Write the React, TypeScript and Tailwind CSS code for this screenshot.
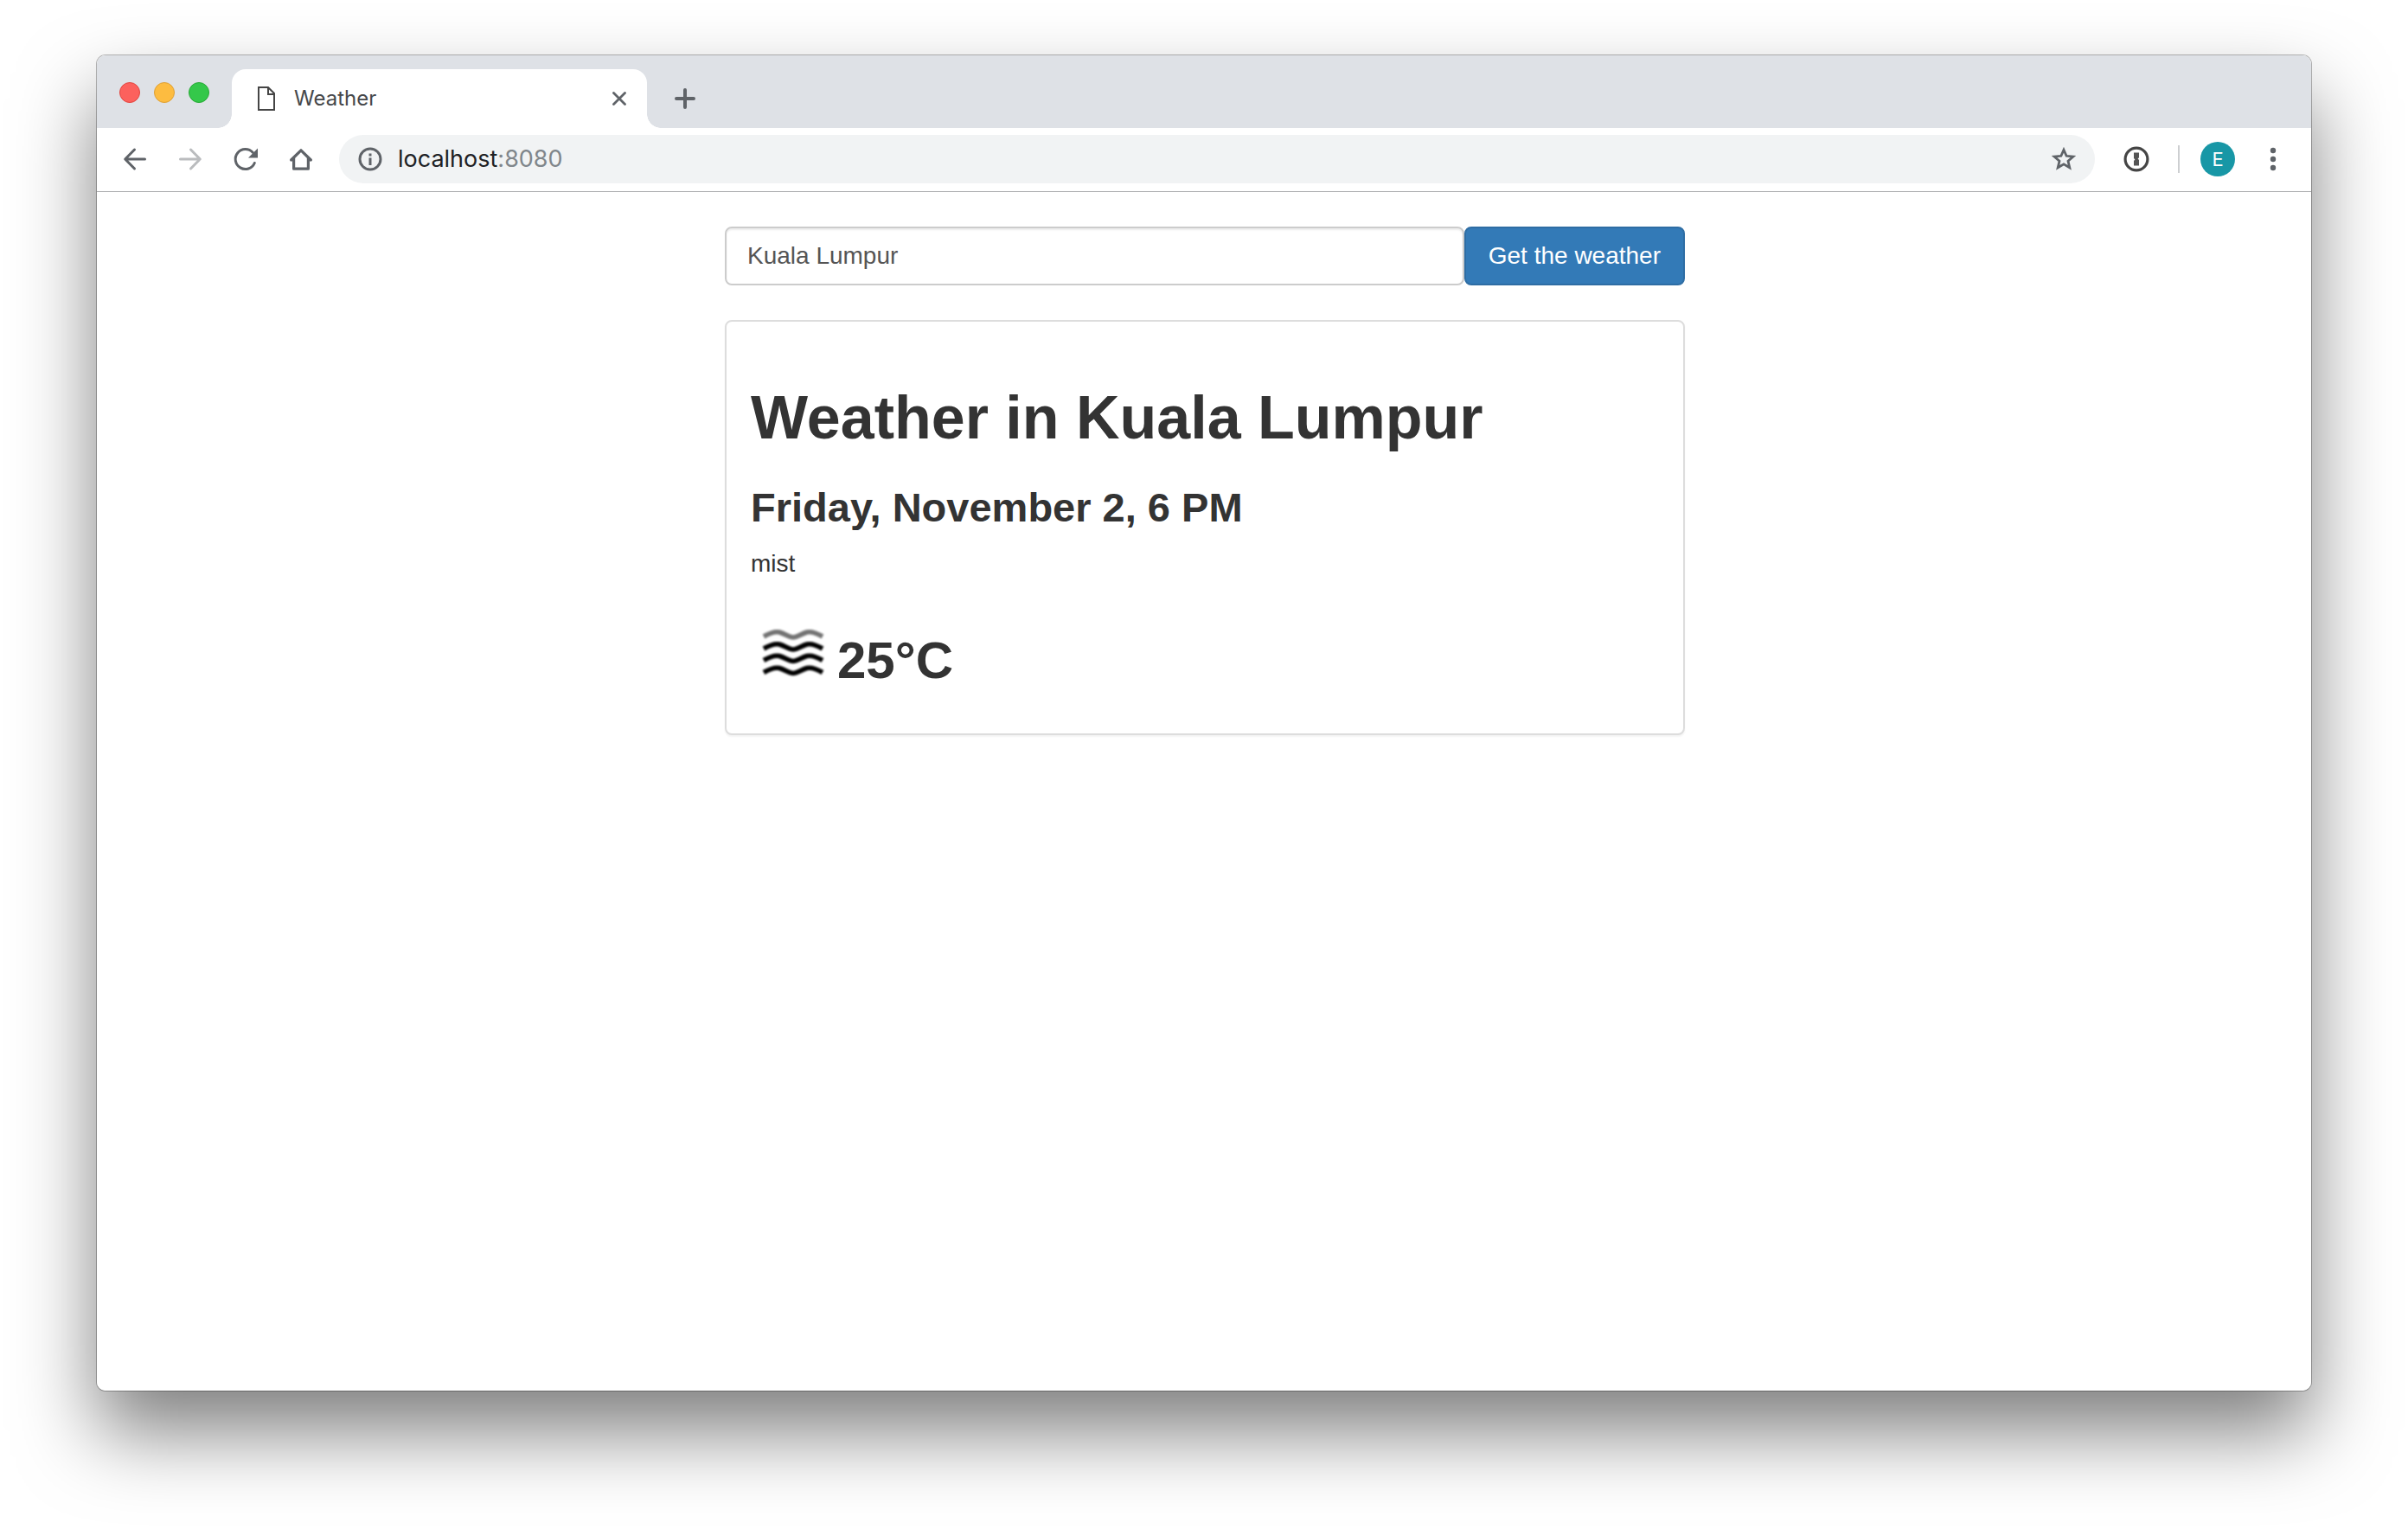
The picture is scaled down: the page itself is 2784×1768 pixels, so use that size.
import { useState } from "react";
import type { ReactNode } from "react";

function ToolbarButton({ label, children, className = "text-[#5f6368]" }: { label: string; children: ReactNode; className?: string }) {
  return (
    <button type="button" aria-label={label} className={`flex h-14 w-16 shrink-0 items-center justify-center ${className}`}>
      {children}
    </button>
  );
}

function BackIcon({ flipped = false }: { flipped?: boolean }) {
  return (
    <svg width="32" height="32" viewBox="0 0 32 32" fill="none" stroke="currentColor" strokeWidth="3" strokeLinecap="round" strokeLinejoin="round" className={flipped ? "rotate-180" : ""}>
      <path d="M27.5 16H5M15.5 5L4.7 16L15.5 27" />
    </svg>
  );
}

function ReloadIcon() {
  return (
    <svg width="32" height="32" viewBox="0 0 32 32" fill="none">
      <path d="M26.3 20.5A11.5 11.5 0 1 1 24.2 8.3" stroke="currentColor" strokeWidth="3" strokeLinecap="round" />
      <path d="M30 3.5V14.5H19Z" fill="currentColor" />
    </svg>
  );
}

function HomeIcon() {
  return (
    <svg width="32" height="32" viewBox="0 0 32 32" fill="none" stroke="currentColor" strokeWidth="3.2" strokeLinejoin="round" strokeLinecap="round">
      <path d="M4.6 17L16 5.8L27.4 17" />
      <path d="M7.6 15V27.2H24.4V15" />
    </svg>
  );
}

function InfoIcon() {
  return (
    <svg width="28" height="28" viewBox="0 0 28 28" fill="none" className="shrink-0 text-[#5f6368]">
      <circle cx="14" cy="14" r="12" stroke="currentColor" strokeWidth="3" />
      <rect x="12.5" y="7.5" width="3" height="3" fill="currentColor" />
      <rect x="12.5" y="12.5" width="3" height="8.5" fill="currentColor" />
    </svg>
  );
}

function StarIcon() {
  return (
    <svg width="32" height="32" viewBox="0 0 32 32" fill="none" stroke="currentColor" strokeWidth="2.8" strokeLinejoin="miter">
      <path d="M16 5.2L19.1 12.3L26.9 13L21 18.2L22.8 25.8L16 21.8L9.2 25.8L11 18.2L5.1 13L12.9 12.3Z" />
    </svg>
  );
}

function KeyholeIcon() {
  return (
    <svg width="30" height="30" viewBox="0 0 30 30" fill="none">
      <circle cx="15" cy="15" r="12.9" stroke="#454545" strokeWidth="3.2" />
      <path d="M12 7.5H18V13.2L16.6 14.6L18 16V22.5H12V17L13.4 15.4L12 14Z" fill="#555" />
    </svg>
  );
}

function MistIcon() {
  const wave = "M14 1C21 -3 27 -5 32 -4C39 -2 43 2 48 2C53 2 57 -2 64 -4C69 -5 75 -3 82 1";
  return (
    <svg width="100" height="84" viewBox="0 0 100 84" fill="none" stroke="#000" strokeWidth="5.5" role="img" aria-label="mist">
      <defs>
        <filter id="soften" x="-10%" y="-50%" width="120%" height="200%">
          <feGaussianBlur stdDeviation="0.9" />
        </filter>
      </defs>
      <g filter="url(#soften)">
        <path d={wave} transform="translate(1 21)" opacity="0.55" />
        <path d={wave} transform="translate(1 35)" />
        <path d={wave} transform="translate(1 48.5)" />
        <path d={wave} transform="translate(1 62.5)" />
      </g>
    </svg>
  );
}

function TabStrip() {
  return (
    <div className="flex h-[84px] items-end bg-[#dee1e6]">
      <div className="flex h-[82px] w-[140px] shrink-0 items-center gap-4 pl-[26px]">
        <button type="button" aria-label="Close window" className="size-6 rounded-full border border-[#e2453f] bg-[#fc615d]" />
        <button type="button" aria-label="Minimize window" className="size-6 rounded-full border border-[#dea035] bg-[#fdbc40]" />
        <button type="button" aria-label="Zoom window" className="size-6 rounded-full border border-[#27a935] bg-[#34c84a]" />
      </div>
      <div className="size-4 shrink-0 bg-[radial-gradient(circle_at_top_left,transparent_15.5px,white_16px)]" />
      <div className="flex h-[68px] w-[480px] shrink-0 items-center rounded-t-2xl bg-white pr-6 pl-[30px]">
        <svg width="20" height="28" viewBox="0 0 20 28" fill="none" stroke="#454545" strokeWidth="2" className="shrink-0">
          <path d="M1 1H12L19 8V27H1Z" />
          <path d="M12 1V9H19" />
        </svg>
        <span className="ml-[22px] flex-1 text-[24px] leading-8 text-[#45474a]">Weather</span>
        <button type="button" aria-label="Close tab" className="text-[#5f6368]">
          <svg width="16" height="16" viewBox="0 0 16 16" fill="none" stroke="currentColor" strokeWidth="2.8" strokeLinecap="round">
            <path d="M1.5 1.5L14.5 14.5M14.5 1.5L1.5 14.5" />
          </svg>
        </button>
      </div>
      <div className="size-4 shrink-0 bg-[radial-gradient(circle_at_top_right,transparent_15.5px,white_16px)]" />
      <button type="button" aria-label="New tab" className="ml-4 flex h-[68px] items-center text-[#5f6368]">
        <svg width="24" height="24" viewBox="0 0 24 24" fill="none" stroke="currentColor" strokeWidth="4" strokeLinecap="round">
          <path d="M12 2V22M2 12H22" />
        </svg>
      </button>
    </div>
  );
}

function Toolbar() {
  return (
    <div className="flex items-center border-b border-[#b0b1b3] bg-white px-3 pt-2 pb-[9px]">
      <ToolbarButton label="Back"><BackIcon /></ToolbarButton>
      <ToolbarButton label="Forward" className="text-[#babcbe]"><BackIcon flipped /></ToolbarButton>
      <ToolbarButton label="Reload"><ReloadIcon /></ToolbarButton>
      <ToolbarButton label="Home"><HomeIcon /></ToolbarButton>
      <div className="ml-3 flex h-14 min-w-0 flex-1 items-center rounded-full bg-[#f1f3f4] pl-[22px]">
        <InfoIcon />
        <span className="ml-[18px] flex-1 text-[27px] leading-9 text-[#202124]">
          localhost<span className="text-[#80868b]">:8080</span>
        </span>
        <button type="button" aria-label="Bookmark this page" className="mr-5 text-[#5f6368]"><StarIcon /></button>
      </div>
      <div className="ml-4"><ToolbarButton label="Password manager"><KeyholeIcon /></ToolbarButton></div>
      <div className="ml-4 h-8 w-0.5 shrink-0 bg-[#cdcfd1]" />
      <button type="button" aria-label="Profile" className="mr-3 ml-6 size-10 shrink-0 rounded-full bg-[#1897a6] text-[22px] leading-10 text-white">E</button>
      <ToolbarButton label="Menu">
        <svg width="8" height="28" viewBox="0 0 8 28" fill="currentColor">
          <circle cx="4" cy="4" r="3.2" />
          <circle cx="4" cy="14" r="3.2" />
          <circle cx="4" cy="24" r="3.2" />
        </svg>
      </ToolbarButton>
    </div>
  );
}

function WeatherPage() {
  const [city, setCity] = useState("Kuala Lumpur");
  return (
    <main className="mx-auto w-[1112px] max-w-full pt-10 pl-0.5 font-['Liberation_Sans',Arial,sans-serif] text-[28px] leading-10 text-[#333]">
      <form className="flex" onSubmit={(e) => e.preventDefault()}>
        <input
          aria-label="City"
          value={city}
          onChange={(e) => setCity(e.target.value)}
          className="h-[68px] min-w-0 flex-1 rounded-lg border-2 border-[#ccc] bg-white px-6 text-[#555] shadow-[inset_0_2px_2px_rgba(0,0,0,0.075)] outline-none"
        />
        <button type="submit" className="h-[68px] shrink-0 rounded-lg border-2 border-[#2e6da4] bg-[#337ab7] px-[26px] text-white">
          Get the weather
        </button>
      </form>
      <section className="mt-10 rounded-lg border-2 border-[#ddd] bg-white px-7 pt-[71px] pb-9 shadow-[0_2px_2px_rgba(0,0,0,0.05)]">
        <h1 className="text-[70px] leading-[80px] font-bold">Weather in Kuala Lumpur</h1>
        <h3 className="mt-[38px] text-[47px] leading-[52px] font-bold">Friday, November 2, 6 PM</h3>
        <p className="mt-[19px]">mist</p>
        <h2 className="mt-[42px] flex h-[98px] text-[60px] leading-[100px] font-bold">
          <MistIcon />
          25°C
        </h2>
      </section>
    </main>
  );
}

export default function App() {
  return (
    <div className="flex min-h-screen flex-col overflow-hidden bg-white px-28 pt-16 pb-40 font-[Inter,sans-serif]">
      <div className="flex flex-1 flex-col rounded-[10px] shadow-[0_0_0_1px_rgba(0,0,0,0.28),0_48px_90px_rgba(0,0,0,0.5)]">
        <div className="flex flex-1 flex-col overflow-hidden rounded-[10px] bg-white">
          <TabStrip />
          <Toolbar />
          <WeatherPage />
        </div>
      </div>
    </div>
  );
}
